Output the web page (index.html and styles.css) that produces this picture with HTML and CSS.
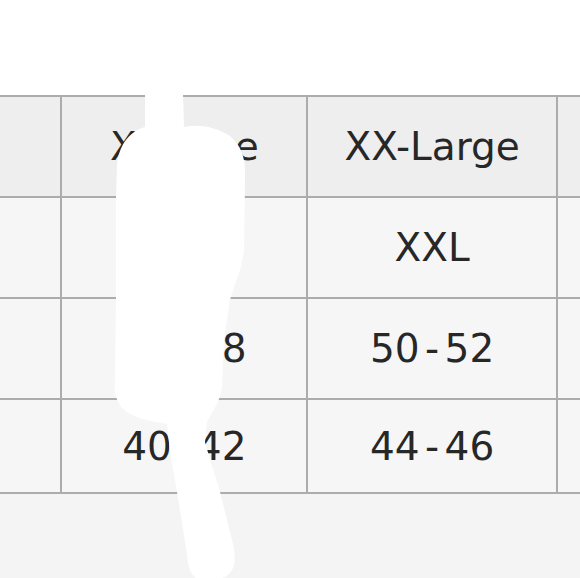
FILE: index.html
```html
<!DOCTYPE html>
<html lang="en">
<head>
<meta charset="utf-8">
<title>Size chart</title>
<link rel="stylesheet" href="styles.css">
</head>
<body>
<div class="page">
  <div class="top-space"></div>
  <div class="chart-wrap">
    <table class="chart">
      <colgroup>
        <col class="c">
        <col class="c">
        <col class="c wide">
        <col class="c">
      </colgroup>
      <thead>
        <tr class="head-row">
          <th></th>
          <th>X-Large</th>
          <th>XX-Large</th>
          <th></th>
        </tr>
      </thead>
      <tbody>
        <tr class="row">
          <td></td>
          <td>XL</td>
          <td>XXL</td>
          <td></td>
        </tr>
        <tr class="row">
          <td></td>
          <td>46<span class="dash">-</span>48</td>
          <td>50<span class="dash">-</span>52</td>
          <td></td>
        </tr>
        <tr class="row last">
          <td></td>
          <td>40<span class="dash">-</span>42</td>
          <td>44<span class="dash">-</span>46</td>
          <td></td>
        </tr>
      </tbody>
    </table>
  </div>
  <svg class="scribble" width="580" height="578" viewBox="0 0 580 578" aria-hidden="true">
    <path d="M145,94 L183,94 L184,127 C198,124 214,126 230,136 C242,146 246,160 245,178 L244,250 C242,270 234,285 230,300 L224,340 L222,388 C220,402 212,412 207,422 L205,442 C210,460 216,478 220,492 L232,540 C237,558 236,574 222,578 L196,578 C190,574 188,566 187,554 L177,492 L170,452 L167,424 C150,421 132,418 122,408 C115,399 114,390 115,378 L116,300 L116,200 L117,165 C119,146 128,132 145,127 Z" fill="#ffffff"/>
  </svg>
</div>
</body>
</html>
```

FILE: styles.css
```css
html, body {
  margin: 0;
  padding: 0;
  overflow: hidden;
  background: #f4f4f4;
}

.page {
  position: relative;
  width: 580px;
  height: 578px;
  overflow: hidden;
  background: #f4f4f4;
  font-family: "DejaVu Sans", Verdana, sans-serif;
  color: #272727;
}

.top-space {
  height: 95px;
  background: #ffffff;
}

.chart-wrap {
  width: 580px;
  overflow: hidden;
}

.chart {
  border-collapse: collapse;
  table-layout: fixed;
  width: 990px;
  margin-left: -186px;
}

.chart .c {
  width: 246px;
}

.chart .wide {
  width: 249px;
}

.chart th,
.chart td {
  border: 2px solid #acacac;
  text-align: center;
  vertical-align: middle;
  font-size: 39px;
  font-weight: normal;
  padding: 0;
  white-space: nowrap;
}

.head-row th {
  background: #eeeeee;
  height: 99px;
}

.row td {
  background: #f6f6f6;
  height: 99px;
}

.row.last td {
  height: 92px;
}

.dash {
  display: inline-block;
  width: 25px;
  text-align: center;
}

.scribble {
  position: absolute;
  top: 0;
  left: 0;
}
```
